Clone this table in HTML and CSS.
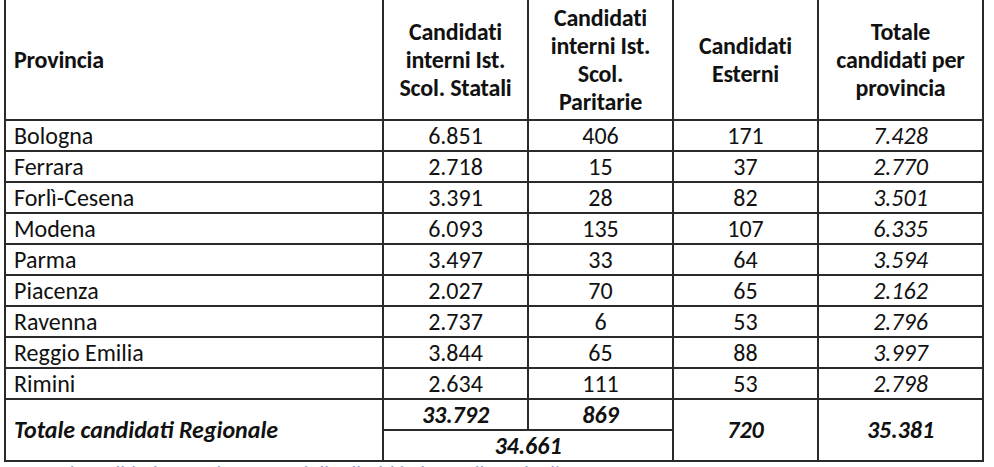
FILE: index.html
```html
<!DOCTYPE html>
<html lang="it">
<head>
<meta charset="utf-8">
<title>Candidati per provincia</title>
<link rel="stylesheet" href="styles.css">
</head>
<body>
<div class="page">
<table class="tab">
  <colgroup>
    <col class="c-prov">
    <col class="c-num">
    <col class="c-num">
    <col class="c-num">
    <col class="c-tot">
  </colgroup>
  <thead>
    <tr class="head">
      <th class="left">Provincia</th>
      <th>Candidati<br>interni Ist.<br>Scol. Statali</th>
      <th>Candidati<br>interni Ist.<br>Scol.<br>Paritarie</th>
      <th>Candidati<br>Esterni</th>
      <th>Totale<br>candidati per<br>provincia</th>
    </tr>
  </thead>
  <tbody>
    <tr><td class="left">Bologna</td><td>6.851</td><td>406</td><td>171</td><td class="it">7.428</td></tr>
    <tr><td class="left">Ferrara</td><td>2.718</td><td>15</td><td>37</td><td class="it">2.770</td></tr>
    <tr><td class="left">Forlì-Cesena</td><td>3.391</td><td>28</td><td>82</td><td class="it">3.501</td></tr>
    <tr><td class="left">Modena</td><td>6.093</td><td>135</td><td>107</td><td class="it">6.335</td></tr>
    <tr><td class="left">Parma</td><td>3.497</td><td>33</td><td>64</td><td class="it">3.594</td></tr>
    <tr><td class="left">Piacenza</td><td>2.027</td><td>70</td><td>65</td><td class="it">2.162</td></tr>
    <tr><td class="left">Ravenna</td><td>2.737</td><td>6</td><td>53</td><td class="it">2.796</td></tr>
    <tr><td class="left">Reggio Emilia</td><td>3.844</td><td>65</td><td>88</td><td class="it">3.997</td></tr>
    <tr><td class="left">Rimini</td><td>2.634</td><td>111</td><td>53</td><td class="it">2.798</td></tr>
    <tr class="tot">
      <td class="left bi" rowspan="2">Totale candidati Regionale</td>
      <td class="bi">33.792</td>
      <td class="bi">869</td>
      <td class="bi" rowspan="2">720</td>
      <td class="bi" rowspan="2">35.381</td>
    </tr>
    <tr class="tot">
      <td class="bi" colspan="2">34.661</td>
    </tr>
  </tbody>
</table>
<p class="note">Nota: i candidati esterni sono stati distribuiti in base alla sede d'esame assegnata</p>
</div>
</body>
</html>
```

FILE: styles.css
```css
html, body {
  margin: 0;
  padding: 0;
  background: #ffffff;
}

.page {
  padding: 0 0 0 4px;
  margin-top: -2px;
  font-family: Carlito, Lato, "Noto Sans", sans-serif;
  color: #111111;
}

.tab {
  border-collapse: collapse;
  table-layout: fixed;
  width: 980px;
  border: 2px solid #1a1a1a;
}

.c-prov { width: 378px; }
.c-num { width: 145px; }
.c-tot { width: 165px; }

.tab th,
.tab td {
  border: 2px solid #2a2a2a;
  padding: 0 4px;
  text-align: center;
  vertical-align: middle;
  font-size: 24px;
  line-height: 28px;
}

.tab th {
  font-weight: 700;
  height: 115px;
  padding-top: 2px;
  padding-bottom: 2px;
  letter-spacing: -0.2px;
}

.tab td {
  height: 29px;
  font-weight: 400;
}

.tab .left {
  text-align: left;
  padding-left: 8px;
}

.tab .it {
  font-style: italic;
}

.tab .bi {
  font-weight: 700;
  font-style: italic;
}

.tab tr.tot td {
  height: 29px;
}

.note {
  margin: 0 0 0 14px;
  font-size: 21px;
  line-height: 22px;
  color: #8a98cc;
}
```
